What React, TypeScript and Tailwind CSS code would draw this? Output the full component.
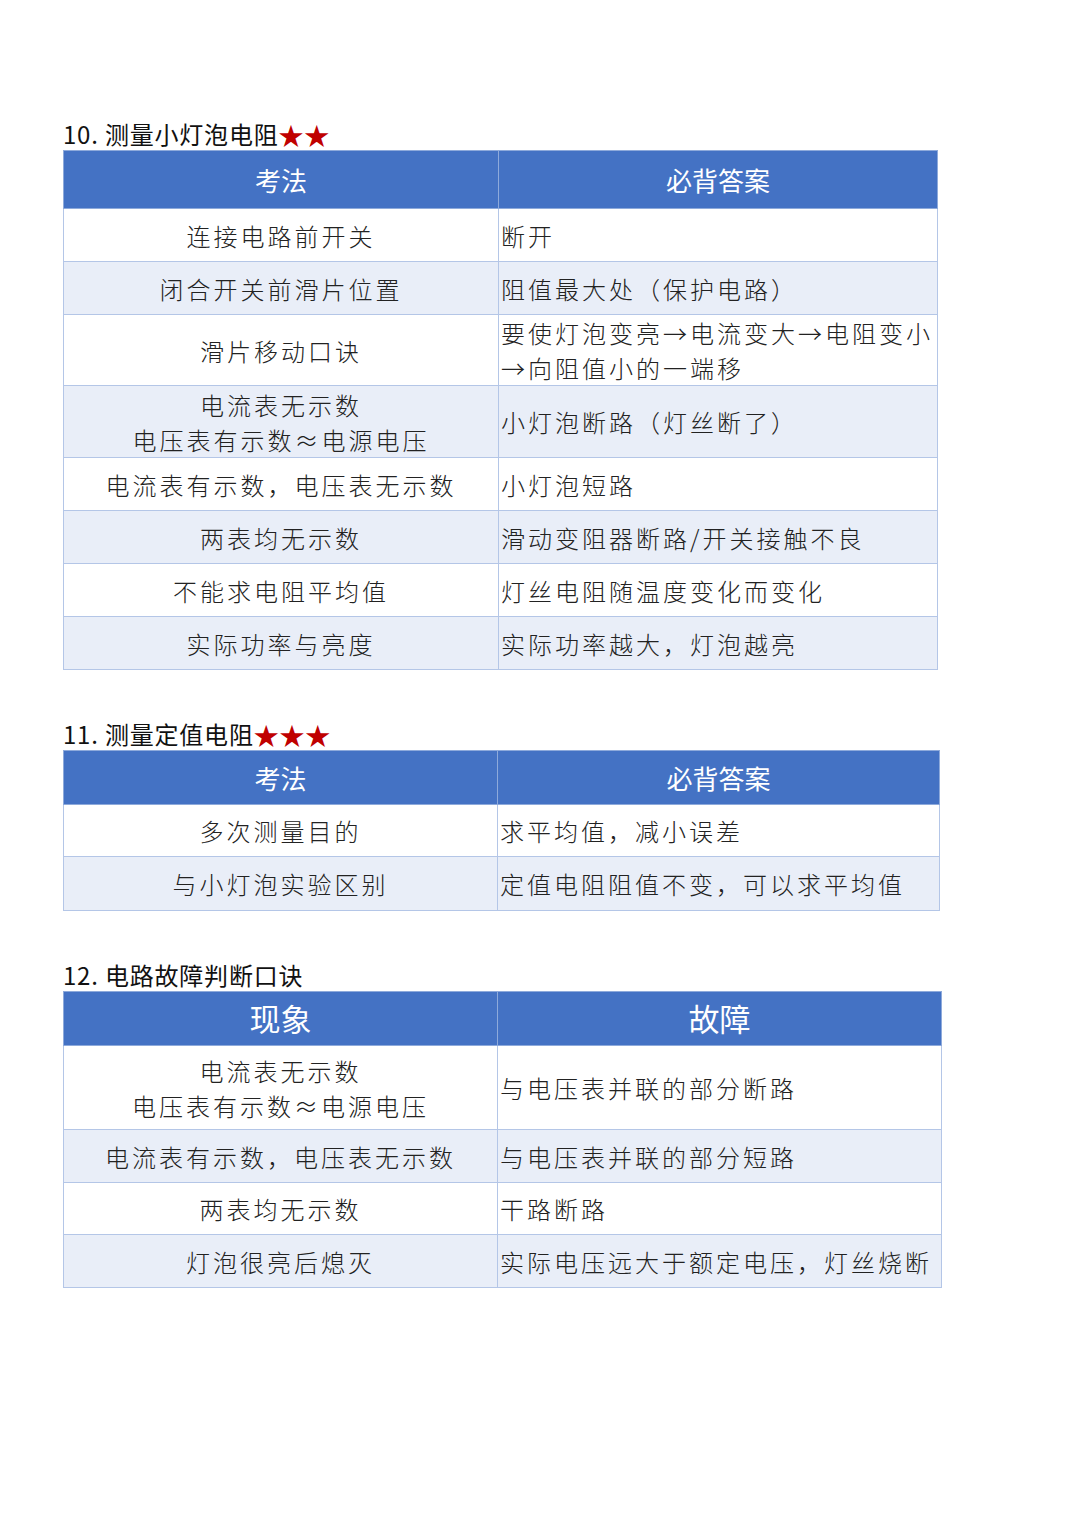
import React from 'react'

type Row = { left: string[]; right: string[]; h: number }

interface Section {
  no: string
  title: string
  stars: number
  heads: [string, string]
  headSize: string
  headH: number
  cols: [number, number]
  rows: Row[]
}

const SECTIONS: Section[] = [
  {
    no: '10.',
    title: '测量小灯泡电阻',
    stars: 2,
    heads: ['考法', '必背答案'],
    headSize: 'text-[26px]',
    headH: 58,
    cols: [435, 439],
    rows: [
      { left: ['连接电路前开关'], right: ['断开'], h: 53 },
      { left: ['闭合开关前滑片位置'], right: ['阻值最大处（保护电路）'], h: 53 },
      { left: ['滑片移动口诀'], right: ['要使灯泡变亮→电流变大→电阻变小', '→向阻值小的一端移'], h: 71 },
      { left: ['电流表无示数', '电压表有示数≈电源电压'], right: ['小灯泡断路（灯丝断了）'], h: 72 },
      { left: ['电流表有示数，电压表无示数'], right: ['小灯泡短路'], h: 53 },
      { left: ['两表均无示数'], right: ['滑动变阻器断路/开关接触不良'], h: 53 },
      { left: ['不能求电阻平均值'], right: ['灯丝电阻随温度变化而变化'], h: 53 },
      { left: ['实际功率与亮度'], right: ['实际功率越大，灯泡越亮'], h: 53 },
    ],
  },
  {
    no: '11.',
    title: '测量定值电阻',
    stars: 3,
    heads: ['考法', '必背答案'],
    headSize: 'text-[26px]',
    headH: 54,
    cols: [434, 442],
    rows: [
      { left: ['多次测量目的'], right: ['求平均值，减小误差'], h: 52 },
      { left: ['与小灯泡实验区别'], right: ['定值电阻阻值不变，可以求平均值'], h: 54 },
    ],
  },
  {
    no: '12.',
    title: '电路故障判断口诀',
    stars: 0,
    heads: ['现象', '故障'],
    headSize: 'text-[31px]',
    headH: 54,
    cols: [434, 444],
    rows: [
      { left: ['电流表无示数', '电压表有示数≈电源电压'], right: ['与电压表并联的部分断路'], h: 84 },
      { left: ['电流表有示数，电压表无示数'], right: ['与电压表并联的部分短路'], h: 53 },
      { left: ['两表均无示数'], right: ['干路断路'], h: 52 },
      { left: ['灯泡很亮后熄灭'], right: ['实际电压远大于额定电压，灯丝烧断'], h: 53 },
    ],
  },
]

const sans = { fontFamily: '"Noto Sans CJK SC", "Noto Sans", sans-serif' }

function Lines({ lines }: { lines: string[] }) {
  return (
    <>
      {lines.map((l, i) => (
        <div key={i} className="leading-[35px] whitespace-nowrap">
          {l}
        </div>
      ))}
    </>
  )
}

function Table({ s }: { s: Section }) {
  return (
    <div className="mb-[48px]">
      <div className="h-[32px] flex items-center text-[24px] text-[#111] tracking-[0.8px]" style={sans}>
        <span>{s.no}&nbsp;{s.title}</span>
        {s.stars > 0 && (
          <span className="text-[#c00000] text-[25px] leading-none">{'★'.repeat(s.stars)}</span>
        )}
      </div>
      <table className="border-collapse" style={sans}>
        <thead>
          <tr style={{ height: s.headH }}>
            {s.heads.map((h, i) => (
              <th
                key={h}
                style={{ width: s.cols[i] }}
                className={`bg-[#4472c4] border border-[#8eaadb] text-white font-normal ${s.headSize} text-center p-0`}
              >
                {h}
              </th>
            ))}
          </tr>
        </thead>
        <tbody>
          {s.rows.map((r, i) => (
            <tr key={i} style={{ height: r.h }} className={i % 2 === 1 ? 'bg-[#e9eef8]' : 'bg-white'}>
              <td className="border border-[#b4c6e7] text-center text-[24px] tracking-[3px] text-[#222] font-light p-0 align-middle">
                <Lines lines={r.left} />
              </td>
              <td className="border border-[#b4c6e7] text-left text-[24px] tracking-[3px] text-[#222] font-light pl-[2px] pr-0 py-0 align-middle">
                <Lines lines={r.right} />
              </td>
            </tr>
          ))}
        </tbody>
      </table>
    </div>
  )
}

export default function App() {
  return (
    <div className="w-[1080px] min-h-[1526px] bg-white pt-[118px] pl-[63px]">
      {SECTIONS.map((s) => (
        <Table key={s.no} s={s} />
      ))}
    </div>
  )
}
